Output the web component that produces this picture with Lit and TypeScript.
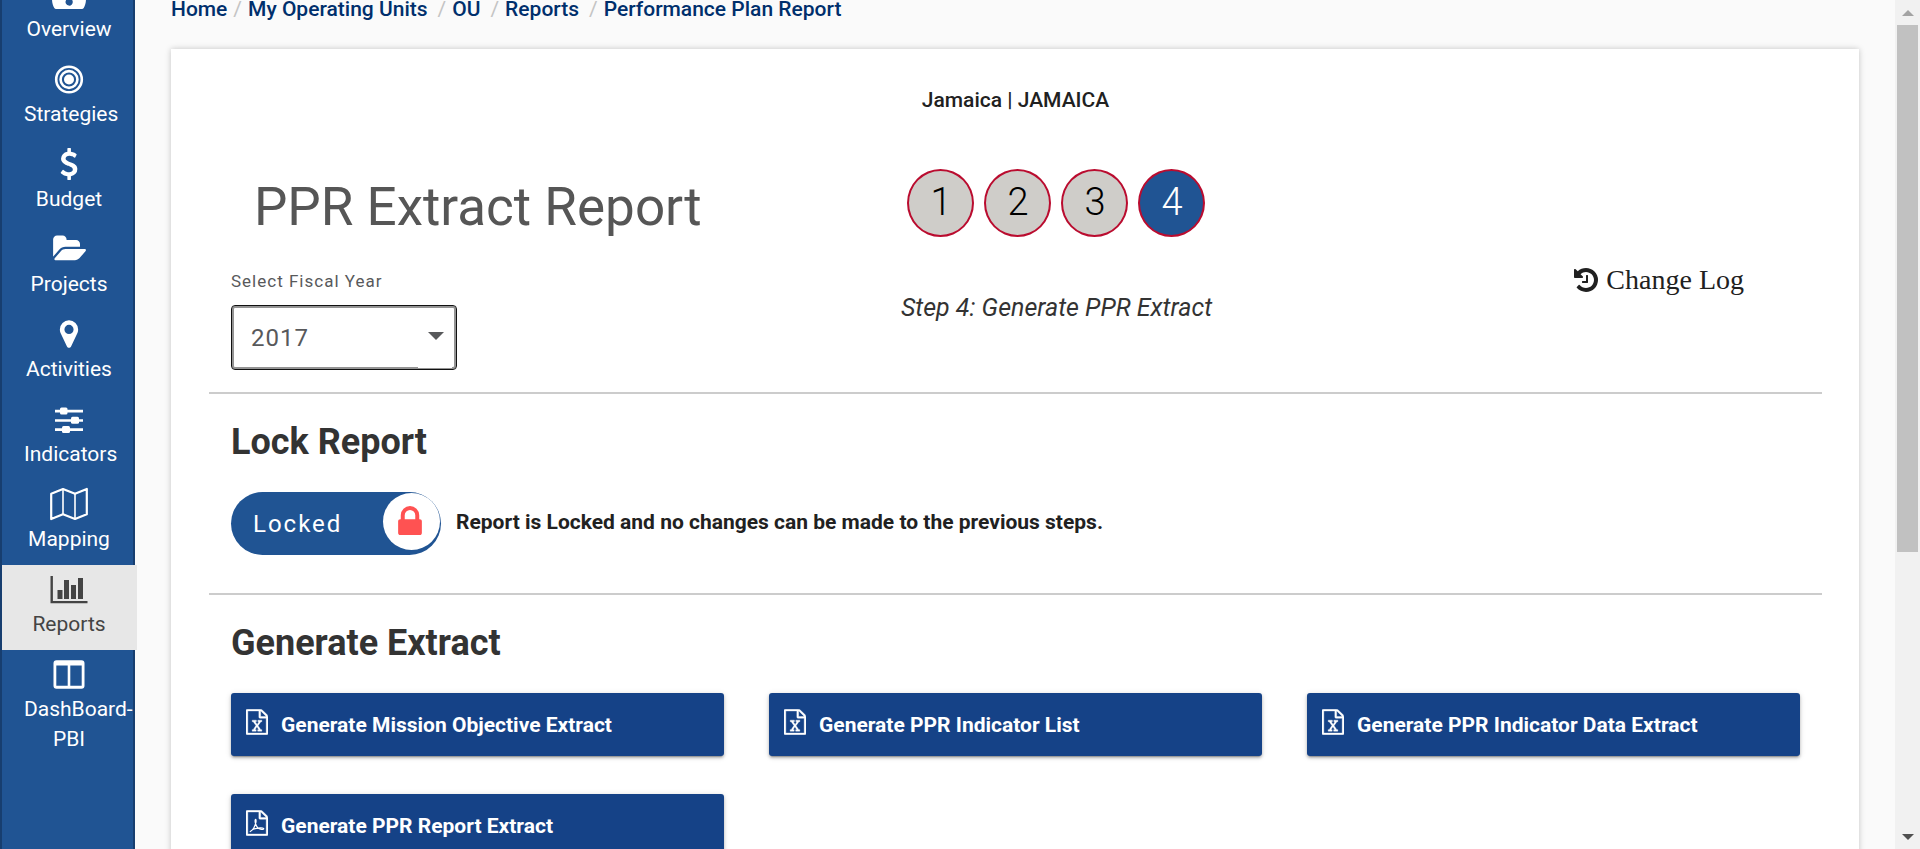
import { LitElement, html, css, svg, TemplateResult } from "lit";
import { customElement, property, state } from "lit/decorators.js";
import { classMap } from "lit/directives/class-map.js";

const icons: Record<string, TemplateResult> = {
  overview: svg`<svg class="icon" viewBox="0 0 34 32" width="34" height="32"><path fill="currentColor" fill-rule="evenodd" d="M17 4a17 17 0 0 0-17 17c0 3.500.8 6.500 2.300 9q.6 1 1.700 1h26q1.100 0 1.700-1c1.500-2.500 2.300-5.500 2.300-9A17 17 0 0 0 17 4zM16.500 20.500l1.500-7.500 1.800.4-1.300 7.300a3.600 3.600 0 1 1-2-.2z"/></svg>`,
  strategies: svg`<svg class="icon" viewBox="0 0 32 32" width="32" height="32"><circle cx="16" cy="16.500" r="12.800" fill="none" stroke="currentColor" stroke-width="2.600"/><circle cx="16" cy="16.500" r="8.400" fill="none" stroke="currentColor" stroke-width="2.600"/><circle cx="16" cy="16.500" r="5" fill="currentColor"/></svg>`,
  budget: svg`<svg class="icon" viewBox="0 0 1792 1792" width="32" height="32"><path fill="currentColor" d="M1362 1185q0 153-99.500 263.500t-258.500 136.500v175q0 14-9 23t-23 9h-135q-13 0-22.500-9.500t-9.500-22.500v-175q-66-9-127.500-31t-101.500-44.500-74-48-46.500-37.500-17.500-18q-17-21-2-41l103-135q7-10 23-12 15-2 24 9l2 2q113 99 243 125 37 8 74 8 81 0 142.500-43t61.500-122q0-28-15-53t-33.500-42-58.500-37.500-66-32-80-32.500q-39-16-61.500-25t-61.500-26.500-62.500-31-56.500-35.500-53.500-42.500-43.500-49-35.500-58-21-66.500-8.500-78q0-138 98-242t255-134v-180q0-13 9.500-22.500t22.500-9.500h135q14 0 23 9t9 23v176q57 6 110.500 23t87 33.500 63.500 37.500 39 29 15 14q17 18 5 38l-81 146q-8 15-23 16-14 3-27-7-3-3-14.500-12t-39-26.500-58.500-32-74.500-26-85.500-11.500q-95 0-155 43t-60 111q0 26 8.500 48t29.500 41.500 39.500 33 56 31 60.500 27 70 27.500q53 20 81 31.500t76 35 75.500 42.500 62 50 53 63.500 31.500 76.500 13 94z"/></svg>`,
  projects: svg`<svg class="icon" viewBox="0 0 1943 1792" width="34" height="32"><path fill="currentColor" d="M1943 952q0 31-31 66l-336 396q-43 51-120.500 86.500t-143.500 35.500h-1088q-34 0-60.500-13t-26.500-43q0-31 31-66l336-396q43-51 120.500-86.500t143.500-35.500h1088q34 0 60.500 13t26.500 43zm-343-344v160h-832q-94 0-197 47.500t-164 119.500l-337 396-5 6q0-4-.5-12.500t-.5-12.500v-960q0-92 66-158t158-66h320q92 0 158 66t66 158v32h544q92 0 158 66t66 158z"/></svg>`,
  activities: svg`<svg class="icon" viewBox="0 0 1792 1792" width="32" height="32"><path fill="currentColor" d="M1152 640q0-106-75-181t-181-75-181 75-75 181 75 181 181 75 181-75 75-181zm256 0q0 109-33 179l-364 774q-16 33-47.500 52t-67.500 19-67.500-19-46.500-52l-365-774q-33-70-33-179 0-212 150-362t362-150 362 150 150 362z"/></svg>`,
  indicators: svg`<svg class="icon" viewBox="0 0 32 32" width="32" height="32"><g fill="currentColor"><path d="M2 6.800h28v2.600H2zM2 16.200h28v2.600H2zM2 25.300h28v2.600H2z"/><rect x="7" y="4.500" width="7.500" height="7" rx="1.500"/><rect x="18" y="13.800" width="8" height="7" rx="1.500"/><rect x="9" y="23" width="8" height="7" rx="1.500"/></g></svg>`,
  mapping: svg`<svg class="icon" viewBox="0 0 38 34" width="38" height="34"><path fill="none" stroke="currentColor" stroke-width="2.200" stroke-linejoin="round" d="M1.200 6.700 13 2l12 4.700L36.800 2v25.300L25 32l-12-4.700L1.200 32z"/><path stroke="currentColor" stroke-width="1.600" d="M13 2v25.300M25 6.700V32"/></svg>`,
  reports: svg`<svg class="icon" viewBox="0 0 38 32" width="38" height="32"><path fill="currentColor" d="M.5 3h2.400v25H37.500v2.300H.5zM7.500 17h5v9h-5zM14 7h5v19h-5zM21 12h5v14h-5zM28 5h5v21h-5z"/></svg>`,
  dashboard: svg`<svg class="icon" viewBox="0 0 32 32" width="32" height="32"><path fill="currentColor" fill-rule="evenodd" d="M3.500 2.300h25a3 3 0 0 1 3 3v22.400a3 3 0 0 1-3 3h-25a3 3 0 0 1-3-3V5.300a3 3 0 0 1 3-3zM3.300 7.500v20.300h11.400V7.500zM17.300 7.500v20.300h11.400V7.500z"/></svg>`,
  history: svg`<svg class="icon" viewBox="128 128 1536 1536" width="24" height="24"><path fill="currentColor" d="M1664 896q0 156-61 298t-164 245-245 164-298 61q-172 0-327-72.500t-264-204.500q-7-10-6.500-22.500t8.500-20.500l137-138q10-9 25-9 16 2 23 12 73 95 179 147t225 52q104 0 198.500-40.500t163.500-109.500 109.500-163.500 40.500-198.500-40.500-198.500-109.500-163.500-163.500-109.500-198.500-40.500q-98 0-188 35.500t-160 101.500l137 138q31 30 14 69-17 40-59 40h-448q-26 0-45-19t-19-45v-448q0-42 40-59 39-17 69 14l130 129q107-101 244.500-156.500t284.500-55.500q156 0 298 61t245 164 164 245 61 298zm-640-288v448q0 14-9 23t-23 9h-320q-14 0-23-9t-9-23v-64q0-14 9-23t23-9h224v-352q0-14 9-23t23-9h64q14 0 23 9t9 23z"/></svg>`,
  lock: svg`<svg class="icon" viewBox="320 128 1152 1408" width="24" height="29"><path fill="currentColor" d="M640 768h512v-192q0-106-75-181t-181-75-181 75-75 181v192zm832 96v576q0 40-28 68t-68 28h-960q-40 0-68-28t-28-68v-576q0-40 28-68t68-28h32v-192q0-184 132-316t316-132 316 132 132 316v192h32q40 0 68 28t28 68z"/></svg>`,
  excel: svg`<svg class="icon" viewBox="128 0 1536 1792" width="22" height="26"><path fill="currentColor" stroke="currentColor" stroke-width="24" d="M1596 380q28 28 48 76t20 88v1152q0 40-28 68t-68 28h-1344q-40 0-68-28t-28-68v-1600q0-40 28-68t68-28h896q40 0 88 20t76 48zm-444-244v376h376q-10-29-22-41l-313-313q-12-12-41-22zm384 1528v-1024h-416q-40 0-68-28t-28-68v-416h-768v1536h1280zm-979-234v106h281v-106h-75l103-161q5-7 10-16.500t7.500-13.500 3.500-4h2q1 4 5 10 2 4 4.500 7.500t6 8 6.500 8.500l107 161h-76v106h291v-106h-68l-192-273 195-282h67v-107h-279v107h74l-103 159q-4 7-10 16.500t-9 13.500l-2 3h-2q-1-4-5-10-6-11-17-23l-106-159h76v-107h-290v107h68l189 272-194 283h-68z"/></svg>`,
  pdf: svg`<svg class="icon" viewBox="128 0 1536 1792" width="22" height="26"><path fill="currentColor" stroke="currentColor" stroke-width="24" d="M1596 380q28 28 48 76t20 88v1152q0 40-28 68t-68 28h-1344q-40 0-68-28t-28-68v-1600q0-40 28-68t68-28h896q40 0 88 20t76 48zm-444-244v376h376q-10-29-22-41l-313-313q-12-12-41-22zm384 1528v-1024h-416q-40 0-68-28t-28-68v-416h-768v1536h1280z"/><path fill="none" stroke="currentColor" stroke-width="85" stroke-linecap="round" stroke-linejoin="round" d="M425 1490c150-70 330-370 395-640 20-110 10-200-25-200s-45 100-15 230c60 240 200 400 360 440 140 30 230 20 230-25s-110-70-260-60c-200 15-400 60-510 110"/></svg>`,
};

const nav = [
  { icon: "overview", label: "Overview" },
  { icon: "strategies", label: "Strategies" },
  { icon: "budget", label: "Budget" },
  { icon: "projects", label: "Projects" },
  { icon: "activities", label: "Activities" },
  { icon: "indicators", label: "Indicators" },
  { icon: "mapping", label: "Mapping" },
  { icon: "reports", label: "Reports", active: true },
  { icon: "dashboard", label: "DashBoard-PBI" },
];

const crumbs = ["Home", "My Operating Units", "OU", "Reports", "Performance Plan Report"];

@customElement("side-nav")
export class SideNav extends LitElement {
  static styles = css`
    :host { display: block; }
    .nav {
      box-sizing: border-box;
      width: 135px;
      height: 100%;
      background: #205493;
      border: solid #173e6f;
      border-width: 0 2px;
    }
    .item {
      box-sizing: border-box;
      width: 135px;
      padding: 8px 23px 11px 22px;
      display: grid;
      grid-template-columns: minmax(0, 1fr);
      gap: 4px;
      color: #fff;
      font-size: 21px;
      line-height: 30px;
      text-align: center;
      text-decoration: none;
    }
    .active { background: #e7e7e7; color: #444; position: relative; }
    .glyph { height: 32px; display: flex; align-items: center; justify-content: center; }
    .icon { flex: none; }
  `;
  render() {
    return html`<nav class="nav" aria-label="Main">
      ${nav.map(
        (n) => html`<a href="#" class=${classMap({ item: true, active: !!n.active })}>
          <span class="glyph">${icons[n.icon]}</span><span>${n.label}</span>
        </a>`
      )}
    </nav>`;
  }
}

@customElement("extract-button")
export class ExtractButton extends LitElement {
  @property() icon = "excel";
  @property() label = "";
  static styles = css`
    :host { display: block; }
    .btn {
      width: 100%;
      height: 63px;
      padding: 0 15px;
      border: 0;
      border-radius: 3px;
      display: flex;
      align-items: center;
      gap: 13px;
      background: #154287;
      color: #fff;
      font: 700 21px/24px Roboto, sans-serif;
      text-align: left;
      cursor: pointer;
      box-shadow: 0 3px 1px -2px rgba(0, 0, 0, 0.2), 0 2px 3px rgba(0, 0, 0, 0.24), 0 1px 6px rgba(0, 0, 0, 0.12);
    }
    .icon { flex: none; margin-bottom: 6px; }
  `;
  render() {
    return html`<button class="btn" type="button">${icons[this.icon]}<span>${this.label}</span></button>`;
  }
}

@customElement("app-root")
export class AppRoot extends LitElement {
  @state() locked = true;

  static styles = css`
    :host {
      display: flex;
      height: 100vh;
      overflow: hidden;
      background: #fafafa;
      color: #212121;
      font-family: Roboto, sans-serif;
      font-size: 21px;
      line-height: 24px;
    }
    .page { flex: 1; min-width: 0; display: flex; margin-top: -30px; }
    .main { flex: 1; min-width: 0; padding: 27px 36px 0; }
    .crumbs { display: flex; margin: 0 0 28px; padding: 0; list-style: none; font-weight: 500; }
    .crumb { display: flex; }
    .crumb + .crumb::before { content: "/"; color: #c4c4c4; padding: 0 6px; font-weight: 400; }
    .crumb + .crumb a { margin-right: 4px; }
    .crumb a { color: #002f6c; text-decoration: none; }
    .card {
      background: #fff;
      padding: 39px 37px 60px 38px;
      box-shadow: 0 0 6px rgba(0, 0, 0, 0.22);
    }
    .unit { text-align: center; font-weight: 500; }
    .head { display: grid; grid-template-columns: repeat(3, minmax(0, 1fr)); padding-bottom: 22px; }
    .year { padding: 63px 22px 0; }
    .title { margin: 0 0 31px; text-align: center; font-size: 53px; line-height: 64px; font-weight: 400; color: #565656; white-space: nowrap; }
    .label { display: block; margin-bottom: 13px; font-size: 17px; line-height: 22px; letter-spacing: 1px; color: #58595b; }
    .select { position: relative; width: 226px; }
    .field {
      appearance: none;
      box-sizing: border-box;
      width: 100%;
      height: 65px;
      padding: 0 19px;
      border: 1px solid #111;
      border-radius: 4px;
      box-shadow: inset 0 0 0 2px #949494;
      background: #fff;
      color: #58595b;
      font: 400 24px/30px Roboto, sans-serif;
      letter-spacing: 1px;
      outline: none;
    }
    .caret { position: absolute; right: 5px; bottom: 2px; width: 34px; height: 56px; background: #fff; pointer-events: none; }
    .steps-col { padding: 57px 0 0 82px; text-align: center; }
    .steps { display: flex; justify-content: center; gap: 10px; margin: 0 0 57px; padding: 0; list-style: none; }
    .step {
      box-sizing: border-box;
      width: 67px;
      height: 68px;
      border: 2px solid #ba0c2f;
      border-radius: 50%;
      background: #cfcdc9;
      color: #000;
      font-size: 38px;
      line-height: 62px;
      font-weight: 300;
    }
    .current { background: #205493; color: #fff; }
    .step-name { margin: 0; font-size: 25px; line-height: 28px; font-style: italic; font-weight: 400; color: #333; }
    .log-col { display: flex; justify-content: flex-end; align-items: flex-start; padding: 152px 78px 0 0; }
    .log {
      display: flex;
      align-items: center;
      gap: 8px;
      color: #212121;
      font: 28px/32px "Liberation Serif", serif;
      text-decoration: none;
    }
    .section { border-top: 2px solid #ccc; padding: 27px 22px 38px; }
    .heading { margin: 0 0 29px; font-size: 36px; line-height: 42px; font-weight: 700; color: #333; }
    .lock-row { display: flex; align-items: center; gap: 15px; font-weight: 700; }
    .message { padding-bottom: 4px; }
    .toggle {
      box-sizing: border-box;
      width: 210px;
      height: 63px;
      padding: 0 1px 4px 22px;
      border: 0;
      border-radius: 32px;
      display: flex;
      align-items: center;
      justify-content: space-between;
      background: #205493;
      color: #fff;
      font: 400 24px/28px Roboto, sans-serif;
      letter-spacing: 2px;
      cursor: pointer;
    }
    .toggle-text { padding-top: 5px; }
    .knob { box-sizing: border-box; width: 57px; height: 57px; padding: 0 3px 3px 0; border-radius: 50%; background: #fff; color: #ff5252; display: flex; align-items: center; justify-content: center; }
    .extracts { display: grid; grid-template-columns: repeat(3, minmax(0, 1fr)); gap: 38px 45px; }
    .scrollbar {
      flex: none;
      box-sizing: border-box;
      width: 25px;
      display: flex;
      flex-direction: column;
      align-items: center;
      background: #f1f1f1;
    }
    .arrow { height: 25px; display: flex; align-items: center; }
    .track { flex: 1; }
    .thumb { width: 21px; height: 66%; background: #c1c1c1; }
  `;

  render() {
    return html`
      <div class="page">
        <side-nav></side-nav>
        <main class="main">
          <ol class="crumbs">
            ${crumbs.map((c) => html`<li class="crumb"><a href="#">${c}</a></li>`)}
          </ol>
          <div class="card">
            <div class="unit">Jamaica | JAMAICA</div>
            <div class="head">
              <div class="year">
                <h1 class="title">PPR Extract Report</h1>
                <label class="label" for="fy">Select Fiscal Year</label>
                <div class="select">
                  <select class="field" id="fy"><option>2017</option></select>
                  <svg class="caret" viewBox="0 0 34 56"><path fill="#58595b" d="M10 20h16l-8 8z"/></svg>
                </div>
              </div>
              <div class="steps-col">
                <ol class="steps">
                  ${[1, 2, 3, 4].map((n) => html`<li class=${classMap({ step: true, current: n === 4 })}>${n}</li>`)}
                </ol>
                <p class="step-name">Step 4: Generate PPR Extract</p>
              </div>
              <div class="log-col">
                <a class="log" href="#">${icons.history}<span>Change Log</span></a>
              </div>
            </div>
            <section class="section">
              <h2 class="heading">Lock Report</h2>
              <div class="lock-row">
                <button class="toggle" type="button" role="switch" aria-checked=${this.locked ? "true" : "false"}>
                  <span class="toggle-text">Locked</span><span class="knob">${icons.lock}</span>
                </button>
                <span class="message">Report is Locked and no changes can be made to the previous steps.</span>
              </div>
            </section>
            <section class="section">
              <h2 class="heading">Generate Extract</h2>
              <div class="extracts">
                <extract-button label="Generate Mission Objective Extract"></extract-button>
                <extract-button label="Generate PPR Indicator List"></extract-button>
                <extract-button label="Generate PPR Indicator Data Extract"></extract-button>
                <extract-button icon="pdf" label="Generate PPR Report Extract"></extract-button>
              </div>
            </section>
          </div>
        </main>
      </div>
      <div class="scrollbar" aria-hidden="true">
        <div class="arrow"><svg width="12" height="6" viewBox="0 0 12 6"><path fill="#a3a3a3" d="M6 0l6 6H0z"/></svg></div>
        <div class="track"><div class="thumb"></div></div>
        <div class="arrow"><svg width="12" height="6" viewBox="0 0 12 6"><path fill="#505050" d="M6 6l6-6H0z"/></svg></div>
      </div>
    `;
  }
}
